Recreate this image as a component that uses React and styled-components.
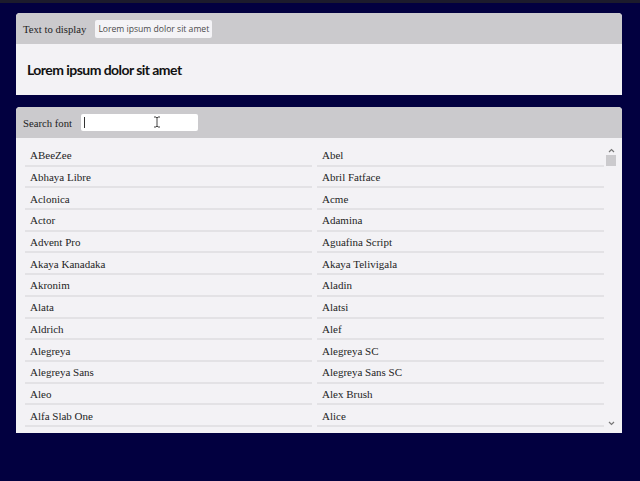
import styled, { createGlobalStyle } from "styled-components";

const GlobalStyle = createGlobalStyle`
  html, body {
    margin: 0;
    padding: 0;
    background: #020040;
  }
  body {
    border-top: 3px solid #1c1b2c;
    height: 478px;
    overflow: hidden;
  }
`;

const fonts = [
  "ABeeZee", "Abel",
  "Abhaya Libre", "Abril Fatface",
  "Aclonica", "Acme",
  "Actor", "Adamina",
  "Advent Pro", "Aguafina Script",
  "Akaya Kanadaka", "Akaya Telivigala",
  "Akronim", "Aladin",
  "Alata", "Alatsi",
  "Aldrich", "Alef",
  "Alegreya", "Alegreya SC",
  "Alegreya Sans", "Alegreya Sans SC",
  "Aleo", "Alex Brush",
  "Alfa Slab One", "Alice",
];

const Page = styled.div`
  display: flex;
  flex-direction: column;
  gap: 12px;
  padding: 10px 18px 0 16px;
`;

const Panel = styled.section`
  background: #f3f2f5;
  border-radius: 4px 4px 0 0;
  overflow: hidden;
  display: flex;
  flex-direction: column;
  height: ${(p) => p.$height}px;
`;

const Header = styled.div`
  height: 31px;
  flex: none;
  background: #cbcacd;
  display: flex;
  align-items: center;
  padding: 0 7px;
  gap: ${(p) => p.$gap}px;
  position: relative;
`;

const Label = styled.span`
  font-family: "Liberation Serif", serif;
  font-size: 10.7px;
  color: #222;
`;

const TextInput = styled.div`
  width: ${(p) => p.$width}px;
  height: ${(p) => p.$tall}px;
  box-sizing: border-box;
  background: ${(p) => p.$bg};
  border-radius: 2px;
  display: flex;
  align-items: center;
  padding: 0 3px;
  font-family: "Open Sans", "Liberation Sans", sans-serif;
  font-size: 8.6px;
  color: #4a4a4a;
`;

const Caret = styled.span`
  width: 1px;
  height: 11px;
  background: #333;
`;

const Beam = styled.svg`
  position: absolute;
  left: 137px;
  top: 9px;
`;

const Display = styled.div`
  flex: 1;
  display: flex;
  align-items: center;
  padding: 0 11px;
  font-family: "Lato", sans-serif;
  font-weight: 700;
  font-size: 14px;
  letter-spacing: -0.55px;
  color: #111;
`;

const ListArea = styled.div`
  flex: 1;
  display: flex;
  padding: 6px 5px 0 9px;
  gap: 1px;
  min-height: 0;
`;

const Grid = styled.div`
  flex: 1;
  display: grid;
  grid-template-columns: 1fr 1fr;
  column-gap: 5px;
  grid-auto-rows: 21.7px;
  align-content: start;
  overflow: hidden;
  padding-top: 1px;
`;

const Item = styled.div`
  box-sizing: border-box;
  border-bottom: 2px solid #e3e2e5;
  display: flex;
  align-items: center;
  padding: 1px 5px 0;
  font-family: "Liberation Serif", serif;
  font-size: 11px;
  color: #1e1e1e;
`;

const Scrollbar = styled.div`
  width: 12px;
  flex: none;
  display: flex;
  flex-direction: column;
  align-items: center;
  height: 284px;
`;

const Arrow = styled.svg`
  flex: none;
  margin: ${(p) => p.$m};
`;

const Thumb = styled.div`
  width: 10px;
  height: 11px;
  background: #cbcacd;
  flex: none;
`;

const Spacer = styled.div`
  flex: 1;
`;

export default function App() {
  return (
    <>
      <GlobalStyle />
      <Page>
        <Panel $height={82}>
          <Header $gap={9}>
            <Label>Text to display</Label>
            <TextInput $width={117} $tall={18} $bg="#f4f3f6">
              Lorem ipsum dolor sit amet
            </TextInput>
          </Header>
          <Display>Lorem ipsum dolor sit amet</Display>
        </Panel>
        <Panel $height={326}>
          <Header $gap={9}>
            <Label>Search font</Label>
            <TextInput $width={117} $tall={17} $bg="#ffffff">
              <Caret />
            </TextInput>
            <Beam width="8" height="12" viewBox="0 0 8 12">
              <path
                d="M1 1h2l1 1 1-1h2M4 2v8M1 11h2l1-1 1 1h2"
                fill="none"
                stroke="#444"
                strokeWidth="1"
              />
            </Beam>
          </Header>
          <ListArea>
            <Grid>
              {fonts.map((f) => (
                <Item key={f}>{f}</Item>
              ))}
            </Grid>
            <Scrollbar>
              <Arrow $m="4px 0 2px" width="7" height="5" viewBox="0 0 7 5">
                <path d="M1 4l2.5-2.5L6 4" fill="none" stroke="#777" strokeWidth="1.2" />
              </Arrow>
              <Thumb />
              <Spacer />
              <Arrow $m="0 0 2px" width="7" height="5" viewBox="0 0 7 5">
                <path d="M1 1l2.5 2.5L6 1" fill="none" stroke="#777" strokeWidth="1.2" />
              </Arrow>
            </Scrollbar>
          </ListArea>
        </Panel>
      </Page>
    </>
  );
}
